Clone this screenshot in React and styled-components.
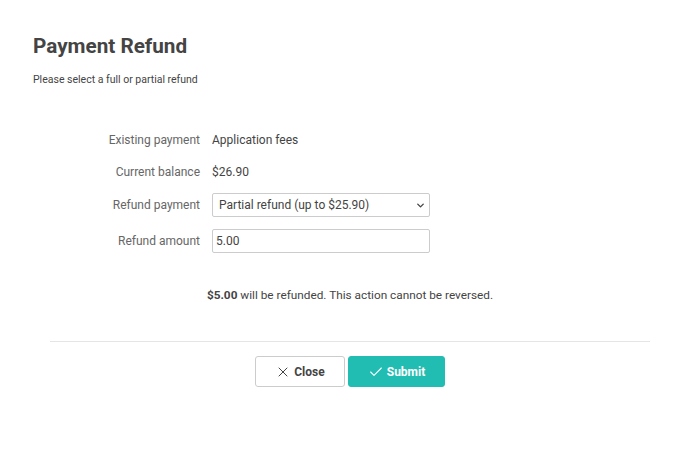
import React from "react"
import styled, { createGlobalStyle } from "styled-components"
import { FiX, FiCheck, FiChevronDown } from "react-icons/fi"

const GlobalStyle = createGlobalStyle`
  body {
    margin: 0;
    background: #fff;
    font-family: Roboto, "Liberation Sans", sans-serif;
    color: #444;
  }
`

const rows = [
  { label: "Existing payment", value: "Application fees" },
  { label: "Current balance", value: "$26.90" },
]

const App = () => {
  return (
    <Page>
      <GlobalStyle />
      <Title>Payment Refund</Title>
      <Subtitle>Please select a full or partial refund</Subtitle>
      <Form>
        {rows.map((row) => (
          <Row key={row.label}>
            <Label>{row.label}</Label>
            <Value>{row.value}</Value>
          </Row>
        ))}
        <Row $field>
          <Label>Refund payment</Label>
          <SelectWrap>
            <Select defaultValue="partial">
              <option value="full">Full refund ($26.90)</option>
              <option value="partial">Partial refund (up to $25.90)</option>
            </Select>
            <Chevron>
              <FiChevronDown size={11} strokeWidth={3} />
            </Chevron>
          </SelectWrap>
        </Row>
        <Row $field>
          <Label>Refund amount</Label>
          <Input defaultValue="5.00" />
        </Row>
      </Form>
      <Message>
        <strong>$5.00</strong> will be refunded. This action cannot be reversed.
      </Message>
      <Divider />
      <Actions>
        <Button>
          <FiX size={16} strokeWidth={1.5} />
          Close
        </Button>
        <Button $primary>
          <FiCheck size={16} strokeWidth={1.6} />
          Submit
        </Button>
      </Actions>
    </Page>
  )
}

export default App

const Page = styled.div`
  width: 700px;
  height: 454px;
  padding: 34px 33px 0;
  box-sizing: border-box;
`

const Title = styled.h1`
  margin: 0;
  font-size: 20.7px;
  font-weight: 700;
  line-height: 24px;
  color: #444;
`

const Subtitle = styled.p`
  margin: 15px 0 0;
  font-size: 10.5px;
  line-height: 14px;
  color: #444;
`

const Form = styled.div`
  margin-top: 37px;
  display: flex;
  flex-direction: column;
`

const Row = styled.div`
  display: grid;
  grid-template-columns: 167px 218px;
  column-gap: 12px;
  align-items: center;
  height: ${(p) => (p.$field ? "24px" : "32px")};
  margin: ${(p) => (p.$field ? "5px 0 7px" : "0")};
`

const Label = styled.div`
  text-align: right;
  font-size: 12px;
  color: #666;
`

const Value = styled.div`
  font-size: 12px;
  color: #444;
`

const SelectWrap = styled.div`
  position: relative;
  width: 218px;
  height: 24px;
`

const Select = styled.select`
  appearance: none;
  -webkit-appearance: none;
  height: 24px;
  width: 218px;
  box-sizing: border-box;
  font-family: Roboto, "Liberation Sans", sans-serif;
  font-size: 12px;
  color: #444;
  background: #fff;
  border: 1px solid #ccc;
  border-radius: 2px;
  padding: 0 20px 0 6px;
  outline: none;
`

const Chevron = styled.span`
  position: absolute;
  right: 4px;
  top: 7px;
  display: flex;
  color: #444;
  pointer-events: none;
`

const Input = styled.input`
  height: 24px;
  width: 218px;
  box-sizing: border-box;
  font-family: Roboto, "Liberation Sans", sans-serif;
  font-size: 12px;
  color: #444;
  border: 1px solid #ccc;
  border-radius: 2px;
  padding: 0 3px;
`

const Message = styled.p`
  margin: 28px 0 0;
  text-align: center;
  font-size: 11.8px;
  color: #444;

  strong {
    font-weight: 700;
  }
`

const Divider = styled.hr`
  margin: 39px 17px 0;
  border: 0;
  border-top: 1px solid #e5e5e5;
`

const Actions = styled.div`
  margin-top: 14px;
  display: flex;
  justify-content: center;
  gap: 3px;
`

const Button = styled.button`
  display: flex;
  align-items: center;
  justify-content: center;
  gap: 3px;
  height: 31px;
  width: ${(p) => (p.$primary ? "97px" : "90px")};
  box-sizing: border-box;
  font-family: Roboto, "Liberation Sans", sans-serif;
  font-size: 12px;
  font-weight: 700;
  border-radius: 3px;
  cursor: pointer;
  color: ${(p) => (p.$primary ? "#fff" : "#444")};
  background: ${(p) => (p.$primary ? "#21bdb2" : "#fff")};
  border: 1px solid ${(p) => (p.$primary ? "#21bdb2" : "#ccc")};
`
